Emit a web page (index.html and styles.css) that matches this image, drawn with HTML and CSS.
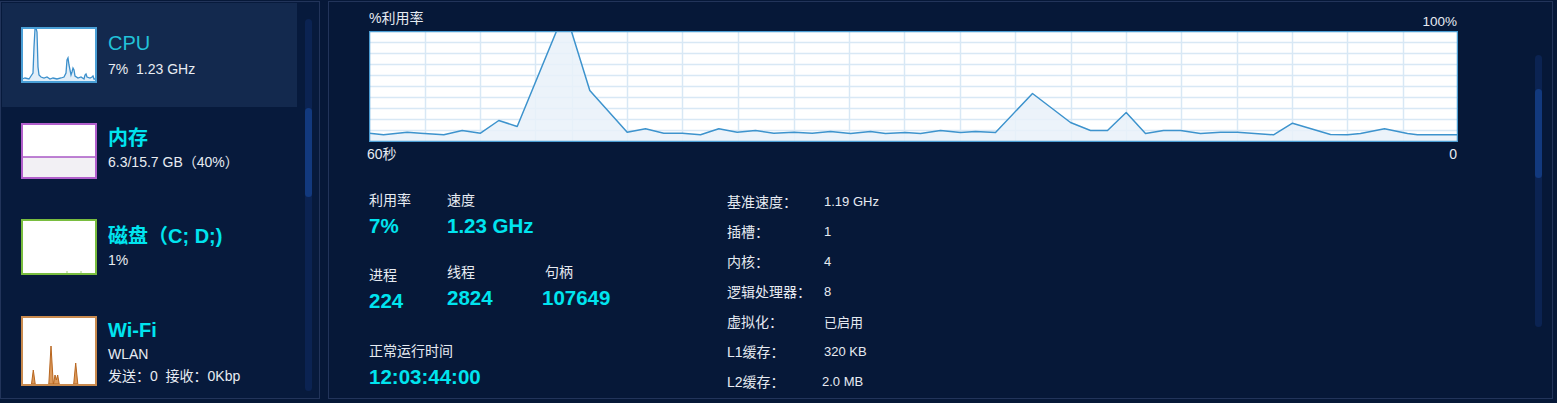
FILE: index.html
```html
<!DOCTYPE html>
<html lang="zh-CN">
<head>
<meta charset="utf-8">
<title>性能</title>
<link rel="stylesheet" href="styles.css">
</head>
<body>
<div class="app">
  <aside class="sidebar">
    <ul class="dev-list">
      <li class="dev dev-first is-active">
        <svg class="thumb" width="76" height="56" viewBox="0 0 76 56">
          <rect x="0" y="0" width="76" height="56" fill="#fff"/>
          <path d="M1,52 L4,51 L8,52 L10,49 L12,46 L13,20 L14,2 L15,1 L16,5 L17,40 L18,48 L20,50 L23,51 L26,50 L29,52 L32,51 L36,52 L40,51 L43,50 L45,46 L46,33 L47,31 L48,38 L50,48 L51,45 L52,41 L53,43 L54,49 L57,51 L60,50 L63,52 L64,48 L65,47 L66,50 L69,51 L71,50 L72,49 L73,52 L75,52 L75,55 L1,55 Z" fill="#e2eef8"/>
          <path d="M1,52 L4,51 L8,52 L10,49 L12,46 L13,20 L14,2 L15,1 L16,5 L17,40 L18,48 L20,50 L23,51 L26,50 L29,52 L32,51 L36,52 L40,51 L43,50 L45,46 L46,33 L47,31 L48,38 L50,48 L51,45 L52,41 L53,43 L54,49 L57,51 L60,50 L63,52 L64,48 L65,47 L66,50 L69,51 L71,50 L72,49 L73,52 L75,52" fill="none" stroke="#3b8fcb" stroke-width="1.3"/>
          <rect x="1" y="1" width="74" height="54" fill="none" stroke="#4a9fd6" stroke-width="2"/>
        </svg>
        <div class="dev-text">
          <div class="dev-title cpu">CPU</div>
          <div class="dev-sub">7%&nbsp;&nbsp;1.23 GHz</div>
        </div>
      </li>
      <li class="dev">
        <svg class="thumb" width="76" height="56" viewBox="0 0 76 56">
          <rect x="0" y="0" width="76" height="56" fill="#fff"/>
          <rect x="1" y="34" width="74" height="21" fill="#f2f0f4"/>
          <line x1="1" y1="34" x2="75" y2="34" stroke="#a957c6" stroke-width="1.5"/>
          <rect x="1" y="1" width="74" height="54" fill="none" stroke="#b25fcc" stroke-width="2"/>
        </svg>
        <div class="dev-text raise">
          <div class="dev-title">内存</div>
          <div class="dev-sub">6.3/15.7 GB（40%）</div>
        </div>
      </li>
      <li class="dev">
        <svg class="thumb" width="76" height="56" viewBox="0 0 76 56">
          <rect x="0" y="0" width="76" height="56" fill="#fff"/>
          <line x1="46" y1="52" x2="46" y2="54" stroke="#9fd07a" stroke-width="1"/>
          <line x1="60" y1="52" x2="60" y2="54" stroke="#9fd07a" stroke-width="1"/>
          <rect x="1" y="1" width="74" height="54" fill="none" stroke="#79bd3f" stroke-width="2"/>
        </svg>
        <div class="dev-text">
          <div class="dev-title">磁盘（C; D;)</div>
          <div class="dev-sub">1%</div>
        </div>
      </li>
      <li class="dev dev-last">
        <svg class="thumb" width="76" height="70" viewBox="0 0 76 70">
          <rect x="0" y="0" width="76" height="70" fill="#fff"/>
          <path d="M10.5,68 L12.3,54 L14.2,68 Z M27.8,68 L30,30 L32.3,68 Z M32.5,68 L34,59 L35.3,64 L36.7,59 L38.2,68 Z M52.7,68 L54.7,47 L56.8,68 Z" fill="#dc9a5c" stroke="#b8661f" stroke-width="1"/>
          <rect x="1" y="1" width="74" height="68" fill="none" stroke="#c98a4e" stroke-width="2"/>
        </svg>
        <div class="dev-text lower">
          <div class="dev-title">Wi‑Fi</div>
          <div class="dev-sub">WLAN</div>
          <div class="dev-sub">发送：0&nbsp;&nbsp;接收：0Kbp</div>
        </div>
      </li>
    </ul>
    <div class="scroll scroll-left"><div class="scroll-thumb"></div></div>
  </aside>

  <main class="main">
    <section class="content">
      <div class="chart-head">
        <span class="chart-title">%利用率</span>
        <span class="chart-max">100%</span>
      </div>
      <svg class="chart" width="1089" height="111" viewBox="-0.5 -0.5 1089 111">
        <defs>
          <clipPath id="clip"><rect x="0" y="0" width="1088" height="110"/></clipPath>
        </defs>
        <rect x="0" y="0" width="1088" height="110" fill="#fff"/>
        <g stroke="#d8e8f5" stroke-width="1.5">
          <line x1="0" y1="11" x2="1088" y2="11"/>
          <line x1="0" y1="22" x2="1088" y2="22"/>
          <line x1="0" y1="33" x2="1088" y2="33"/>
          <line x1="0" y1="44" x2="1088" y2="44"/>
          <line x1="0" y1="55" x2="1088" y2="55"/>
          <line x1="0" y1="66" x2="1088" y2="66"/>
          <line x1="0" y1="77" x2="1088" y2="77"/>
          <line x1="0" y1="88" x2="1088" y2="88"/>
          <line x1="0" y1="99" x2="1088" y2="99"/>
          <line x1="56" y1="0" x2="56" y2="110"/>
          <line x1="111" y1="0" x2="111" y2="110"/>
          <line x1="166" y1="0" x2="166" y2="110"/>
          <line x1="203" y1="0" x2="203" y2="110"/>
          <line x1="258" y1="0" x2="258" y2="110"/>
          <line x1="313" y1="0" x2="313" y2="110"/>
          <line x1="369" y1="0" x2="369" y2="110"/>
          <line x1="425" y1="0" x2="425" y2="110"/>
          <line x1="480" y1="0" x2="480" y2="110"/>
          <line x1="535" y1="0" x2="535" y2="110"/>
          <line x1="591" y1="0" x2="591" y2="110"/>
          <line x1="646" y1="0" x2="646" y2="110"/>
          <line x1="702" y1="0" x2="702" y2="110"/>
          <line x1="757" y1="0" x2="757" y2="110"/>
          <line x1="812" y1="0" x2="812" y2="110"/>
          <line x1="868" y1="0" x2="868" y2="110"/>
          <line x1="923" y1="0" x2="923" y2="110"/>
          <line x1="978" y1="0" x2="978" y2="110"/>
          <line x1="1034" y1="0" x2="1034" y2="110"/>
        </g>
        <g clip-path="url(#clip)">
          <path d="M0,101.7 L14,103.3 L37.7,100.7 L51,101.7 L74.3,103.3 L92.7,99 L111,101.7 L129.3,89 L147.7,95 L195.5,-21 L220.3,59 L257.7,100.7 L276,97.3 L294.3,101.7 L312.7,101.7 L331,103.3 L349.3,97.3 L367.7,100.7 L386,99 L404.3,101.7 L424.3,100.7 L442.7,101.7 L461,100 L481,102 L501,100 L516,102 L536,101 L551,102 L571,99 L591,101 L606,100 L626,101 L663,62 L701,91 L721,99 L738,99 L756.7,81 L776,102 L794,99 L811,99 L831,102 L851,100.7 L868,100.7 L904,103.3 L923,91.7 L961,103 L978,103.3 L991,102 L1015,97.3 L1038,102 L1048,103.3 L1088,103.3 L1088,110 L0,110 Z" fill="#e9f1f9" fill-opacity="0.85"/>
          <path d="M0,101.7 L14,103.3 L37.7,100.7 L51,101.7 L74.3,103.3 L92.7,99 L111,101.7 L129.3,89 L147.7,95 L195.5,-21 L220.3,59 L257.7,100.7 L276,97.3 L294.3,101.7 L312.7,101.7 L331,103.3 L349.3,97.3 L367.7,100.7 L386,99 L404.3,101.7 L424.3,100.7 L442.7,101.7 L461,100 L481,102 L501,100 L516,102 L536,101 L551,102 L571,99 L591,101 L606,100 L626,101 L663,62 L701,91 L721,99 L738,99 L756.7,81 L776,102 L794,99 L811,99 L831,102 L851,100.7 L868,100.7 L904,103.3 L923,91.7 L961,103 L978,103.3 L991,102 L1015,97.3 L1038,102 L1048,103.3 L1088,103.3" fill="none" stroke="#3d93cd" stroke-width="1.5" stroke-linejoin="round"/>
        </g>
        <rect x="0" y="0" width="1088" height="110" fill="none" stroke="#4b9dd3" stroke-width="1.5"/>
      </svg>
      <div class="chart-axis">
        <span>60秒</span>
        <span>0</span>
      </div>

      <div class="stats">
        <div class="stats-left">
          <div class="stat-row row-1">
            <div class="stat w-78">
              <div class="stat-label">利用率</div>
              <div class="stat-value">7%</div>
            </div>
            <div class="stat">
              <div class="stat-label">速度</div>
              <div class="stat-value">1.23 GHz</div>
            </div>
          </div>
          <div class="stat-row row-2">
            <div class="stat w-78 drop">
              <div class="stat-label">进程</div>
              <div class="stat-value">224</div>
            </div>
            <div class="stat w-95">
              <div class="stat-label">线程</div>
              <div class="stat-value">2824</div>
            </div>
            <div class="stat">
              <div class="stat-label indent">句柄</div>
              <div class="stat-value">107649</div>
            </div>
          </div>
          <div class="stat-row row-3">
            <div class="stat">
              <div class="stat-label">正常运行时间</div>
              <div class="stat-value">12:03:44:00</div>
            </div>
          </div>
        </div>
        <dl class="specs">
          <div class="spec"><dt>基准速度：</dt><dd>1.19 GHz</dd></div>
          <div class="spec"><dt>插槽：</dt><dd>1</dd></div>
          <div class="spec"><dt>内核：</dt><dd>4</dd></div>
          <div class="spec"><dt>逻辑处理器：</dt><dd>8</dd></div>
          <div class="spec"><dt>虚拟化：</dt><dd>已启用</dd></div>
          <div class="spec"><dt>L1缓存：</dt><dd>320 KB</dd></div>
          <div class="spec"><dt>L2缓存：</dt><dd class="nudge">2.0 MB</dd></div>
        </dl>
      </div>
    </section>
    <div class="scroll scroll-right"><div class="scroll-thumb"></div></div>
  </main>
</div>
</body>
</html>
```

FILE: styles.css
```css
* { box-sizing: border-box; margin: 0; padding: 0; }

html, body {
  width: 1557px;
  height: 403px;
  overflow: hidden;
}

body {
  background: #061838;
  color: #e6ebf2;
  font-family: "Liberation Sans", "Noto Sans CJK SC", sans-serif;
}

.app {
  display: flex;
  gap: 8px;
  padding-top: 1px;
}

/* ---------- sidebar ---------- */
.sidebar {
  width: 320px;
  height: 398px;
  border: 1px solid #22345a;
  background: #071a3c;
  display: flex;
  padding: 1px 0 0 1px;
}

.dev-list {
  list-style: none;
  width: 295px;
}

.dev {
  display: flex;
  align-items: center;
  padding: 16px 0 24px 19px;
}

.dev-first { padding-top: 24px; }
.dev-last { padding-top: 15px; }

.dev.is-active { background: #13294e; }

.thumb { display: block; flex: none; }

.dev-text {
  margin-left: 11px;
}

.dev-text.raise { padding-bottom: 5px; }
.dev-text.lower { padding-top: 3px; }

.dev-title {
  font-size: 20px;
  line-height: 26px;
  font-weight: 700;
  color: #00e4ef;
}

.dev-title.cpu {
  font-weight: 400;
  color: #22c2d9;
  margin-bottom: 2px;
}

.dev-sub {
  font-size: 14px;
  line-height: 22px;
  color: #e8ecf2;
}

.scroll {
  width: 7px;
  border-radius: 4px;
  background: #0b2352;
  flex: none;
}

.scroll-thumb {
  width: 7px;
  border-radius: 4px;
  background: #12397e;
}

.scroll-left {
  margin: 16px 0 0 8px;
  height: 372px;
}

.scroll-left .scroll-thumb {
  margin-top: 89px;
  height: 89px;
}

/* ---------- main ---------- */
.main {
  width: 1225px;
  height: 398px;
  border: 1px solid #22345a;
  background: #061838;
  display: flex;
}

.content {
  padding-left: 40px;
  width: 1128px;
  flex: none;
}

.chart-head {
  width: 1088px;
  height: 29px;
  display: flex;
  justify-content: space-between;
  align-items: flex-end;
  font-size: 14px;
  line-height: 18px;
  padding-bottom: 2px;
}

.chart-title { margin-bottom: 2px; }
.chart-max { font-size: 13.5px; margin-bottom: -2px; }

.chart { display: block; margin-left: -0.5px; }

.chart-axis {
  width: 1088px;
  display: flex;
  justify-content: space-between;
  font-size: 14px;
  line-height: 18px;
  margin-top: 3px;
}

.chart-axis span:first-child { margin-left: -2px; }

.stats {
  display: flex;
  margin-top: 23px;
}

.stats-left {
  width: 358px;
  flex: none;
}

.stat-row {
  display: flex;
}

.row-1 { margin-top: 5px; }
.row-2 { margin-top: 25px; }
.row-3 { margin-top: 29px; }

.stat { display: flex; flex-direction: column; }
.w-78 { width: 78px; }
.w-95 { width: 95px; }
.drop { margin-top: 3px; }
.indent { margin-left: 3px; }

.stat-label {
  font-size: 14px;
  line-height: 18px;
}

.stat-value {
  margin-top: 5px;
  font-size: 20.5px;
  line-height: 24px;
  font-weight: 700;
  color: #00e4ef;
}

.specs {
  display: flex;
  flex-direction: column;
}

.spec {
  display: flex;
  height: 30px;
  align-items: center;
}

.spec dt {
  width: 97px;
  font-size: 14px;
}

.spec dd {
  font-size: 13px;
}

.spec dd.nudge { margin-left: -2px; }

.scroll-right {
  margin: 53px 0 0 78px;
  height: 272px;
}

.scroll-right .scroll-thumb {
  margin-top: 34px;
  height: 89px;
}
```
